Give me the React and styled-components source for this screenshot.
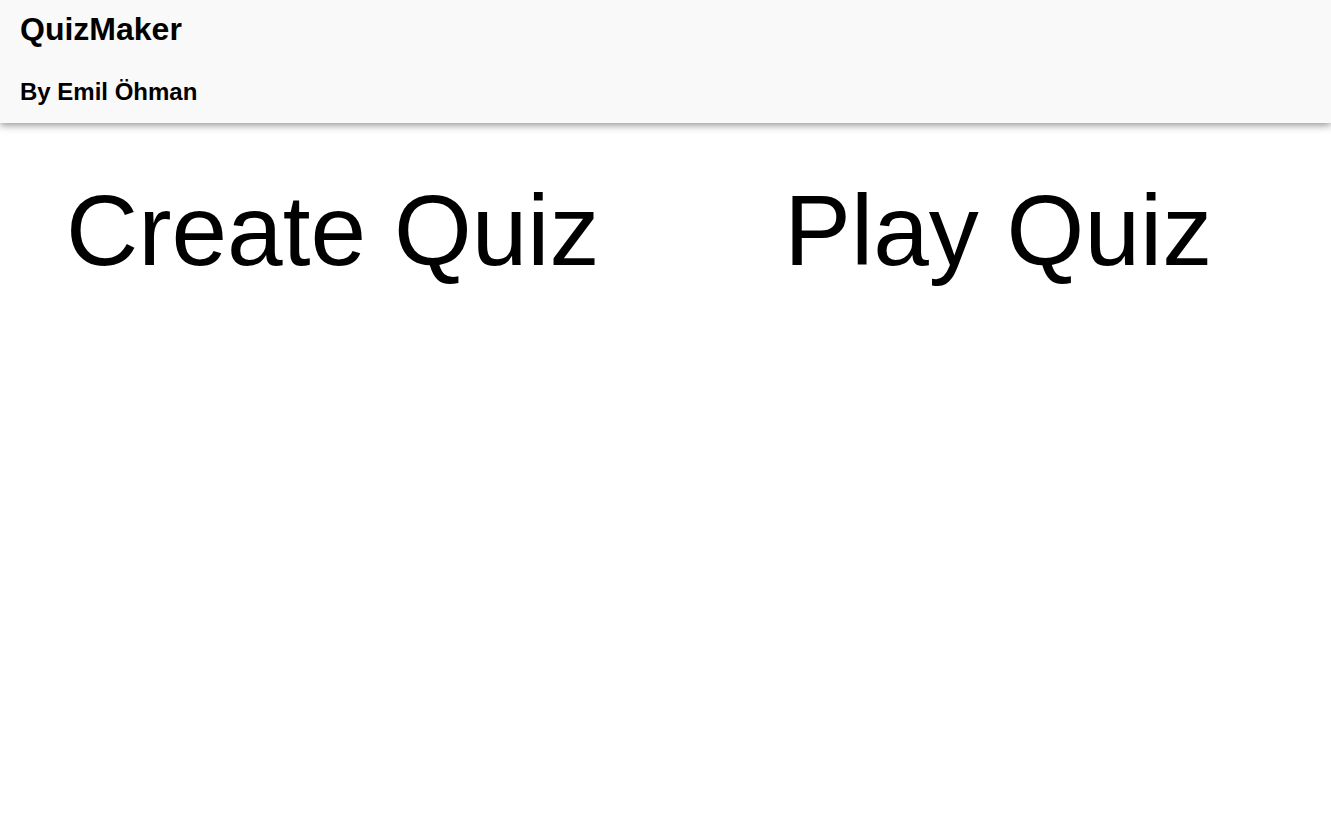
import React from "react";
import styled, { createGlobalStyle } from "styled-components";

const GlobalStyle = createGlobalStyle`
  html, body {
    margin: 0;
    padding: 0;
    background: #ffffff;
    font-family: "Liberation Sans", Arial, Helvetica, sans-serif;
    color: #000000;
  }
`;

const Header = styled.header`
  position: relative;
  z-index: 1;
  background: #f9f9f9;
  padding: 11px 20px 17px;
  box-shadow: 0 2px 8px rgba(0, 0, 0, 0.45);
`;

const Title = styled.h1`
  margin: 0;
  font-size: 32px;
  line-height: 37px;
  font-weight: 700;
`;

const Byline = styled.h2`
  margin: 30px 0 0;
  font-size: 24px;
  line-height: 28px;
  font-weight: 700;
`;

const Menu = styled.main`
  display: grid;
  grid-template-columns: 1fr 1fr;
  padding-top: 50px;
`;

const MenuItem = styled.div`
  text-align: center;
  font-size: 100px;
  line-height: 115px;
  font-weight: 400;
  cursor: pointer;
  user-select: none;
`;

export default function App() {
  return (
    <>
      <GlobalStyle />
      <Header>
        <Title>QuizMaker</Title>
        <Byline>By Emil Öhman</Byline>
      </Header>
      <Menu>
        <MenuItem>Create Quiz</MenuItem>
        <MenuItem>Play Quiz</MenuItem>
      </Menu>
    </>
  );
}
